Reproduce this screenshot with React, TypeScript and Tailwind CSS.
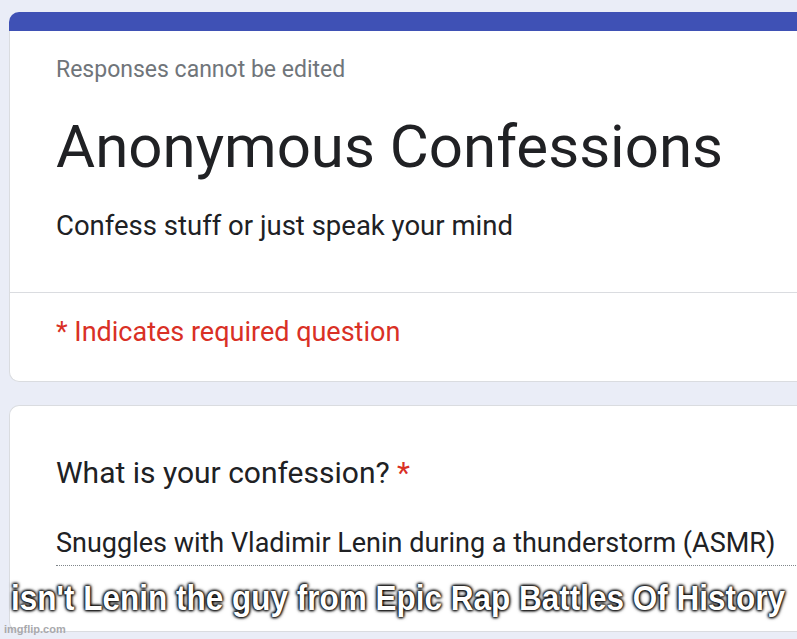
export default function App() {
  return (
    <div className="relative w-[797px] h-[639px] overflow-hidden bg-[#eaedf7] font-['Roboto',sans-serif]">
      <div className="pl-[9px] pt-3 w-[860px] flex flex-col gap-[23px]">
        {/* Card 1 */}
        <div className="flex flex-col">
          <div className="h-[19px] bg-[#3f51b5] rounded-tl-[10px]" />
          <div className="bg-white border-l border-b border-[#dadce0] rounded-bl-[10px]">
            <div className="pl-[46px]">
              <div className="mt-[27px] text-[23px] leading-none text-[#70757a]">Responses cannot be edited</div>
              <div className="mt-[36px] text-[60px] leading-none text-[#202124]">Anonymous Confessions</div>
              <div className="mt-[35px] text-[27.5px] leading-none text-[#202124]">Confess stuff or just speak your mind</div>
            </div>
            <div className="mt-[52px] border-t border-[#dadce0]" />
            <div className="pl-[46px] pt-[26px] pb-[35px]">
              <div className="text-[27px] leading-none text-[#d93025]">* Indicates required question</div>
            </div>
          </div>
        </div>
        {/* Card 2 */}
        <div className="bg-white border-l border-t border-b border-[#dadce0] rounded-l-[10px] h-[227px]">
          <div className="pl-[46px]">
            <div className="mt-[52px] text-[30px] leading-none text-[#202124]">
              What is your confession? <span className="text-[#d93025]">*</span>
            </div>
            <div className="mt-[42px] pb-[8px] border-b border-dotted border-[#80868b] text-[27px] leading-none text-[#202124]">
              Snuggles with Vladimir Lenin during a thunderstorm (ASMR)
            </div>
          </div>
        </div>
      </div>
      {/* meme caption */}
      <div className="absolute left-0 right-0 top-[580px] flex justify-center">
        <div className="whitespace-nowrap font-['Liberation_Sans',Arial,sans-serif] font-bold text-[35px] leading-none text-white origin-center scale-x-[0.9] [text-shadow:0_0_3px_#000,0_0_3px_#000,0_0_3px_#000,0_0_5px_#000]">
          isn't Lenin the guy from Epic Rap Battles Of History
        </div>
      </div>
      <div className="absolute left-[4px] top-[624px] font-['Liberation_Sans',Arial,sans-serif] font-bold text-[11px] leading-none text-[#a9a9ad]">
        imgflip.com
      </div>
    </div>
  );
}
